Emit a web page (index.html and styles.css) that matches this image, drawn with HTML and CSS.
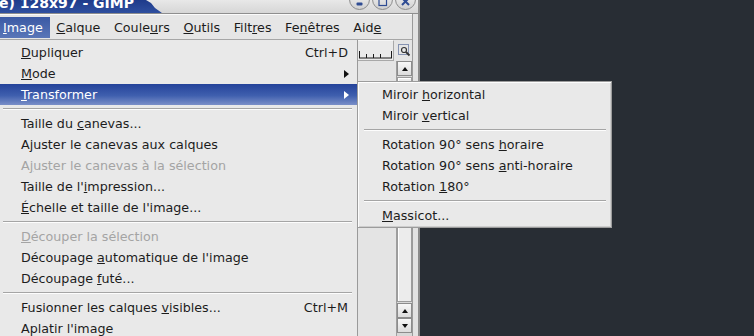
FILE: index.html
```html
<!DOCTYPE html>
<html>
<head>
  <title>GIMP - Image</title>
  <link rel="stylesheet" href="styles.css">
</head>
<body>
  <div class="screen">
    <div class="window">
      <div class="titlebar">
        <div class="title-tab"><span class="title-text">e) 128x97 - GIMP</span></div>
        <div class="title-buttons">
          <span class="tbtn">
            <svg width="21" height="21" viewBox="0 0 21 21"><rect x="7.5" y="13.5" width="6" height="3" rx="1" fill="#2f4c93"/></svg>
          </span>
          <span class="tbtn">
            <svg width="21" height="21" viewBox="0 0 21 21"><rect x="7" y="8.5" width="7.5" height="8" fill="none" stroke="#2f4c93" stroke-width="1.2"/></svg>
          </span>
          <span class="tbtn">
            <svg width="21" height="21" viewBox="0 0 21 21"><path d="M7 9 L14 16 M14 9 L7 16" stroke="#2f4c93" stroke-width="2"/></svg>
          </span>
        </div>
      </div>

      <div class="frame">
        <div class="inner">
          <div class="menubar">
            <span class="mb-item first active"><u>I</u>mage</span>
            <span class="mb-item"><u>C</u>alque</span>
            <span class="mb-item">Coule<u>u</u>rs</span>
            <span class="mb-item"><u>O</u>utils</span>
            <span class="mb-item">Filt<u>r</u>es</span>
            <span class="mb-item">Fe<u>n</u>êtres</span>
            <span class="mb-item">Aid<u>e</u></span>
          </div>

          <div class="imgwin">
            <div class="hruler">
              <svg width="36" height="19" viewBox="0 0 36 19">
                <path d="M2 17 H35 M2.5 10 V17 M9.5 13 V17 M16.5 13 V17 M23.5 13 V17 M34.5 10 V17" stroke="#1a1a1a" stroke-width="1"/>
              </svg>
            </div>
            <div class="nav-btn">
              <svg width="13" height="13" viewBox="0 0 13 13">
                <rect x="0.5" y="0.5" width="10" height="10" fill="none" stroke="#27407e" stroke-dasharray="1 1"/>
                <circle cx="6" cy="6" r="2.5" fill="#e8e8e8" stroke="#333" stroke-width="1.2"/>
                <path d="M8 8 L11.5 11.5" stroke="#333" stroke-width="1.8"/>
              </svg>
            </div>
            <div class="canvas"></div>
            <div class="vscroll">
              <div class="step up"></div>
              <div class="thumb"></div>
              <div class="step up"></div>
              <div class="step down"></div>
            </div>
          </div>
        </div>
        <div class="edge"></div>
      </div>

      <div class="menu main">
        <div class="row"><span><u>D</u>upliquer</span><span>Ctrl+D</span></div>
        <div class="row"><span><u>M</u>ode</span><span class="arrow"></span></div>
        <div class="row sel"><span><u>T</u>ransformer</span><span class="arrow"></span></div>
        <div class="sep"></div>
        <div class="row"><span>Taille du <u>c</u>anevas...</span></div>
        <div class="row"><span>Ajuster le canevas aux calques</span></div>
        <div class="row off"><span>A<u>j</u>uster le canevas à la sélection</span></div>
        <div class="row"><span>Taille de l'<u>i</u>mpression...</span></div>
        <div class="row"><span><u>É</u>chelle et taille de l'image...</span></div>
        <div class="sep"></div>
        <div class="row off"><span><u>D</u>écouper la sélection</span></div>
        <div class="row"><span>Découpage <u>a</u>utomatique de l'image</span></div>
        <div class="row"><span>Découpage <u>f</u>uté...</span></div>
        <div class="sep"></div>
        <div class="row"><span>Fusionner les calques <u>v</u>isibles...</span><span>Ctrl+M</span></div>
        <div class="row"><span>Aplatir l'image</span></div>
      </div>

      <div class="menu sub">
        <div class="row"><span>Miroir <u>h</u>orizontal</span></div>
        <div class="row"><span>Miroir <u>v</u>ertical</span></div>
        <div class="sep"></div>
        <div class="row"><span>Rotation 90° sens <u>h</u>oraire</span></div>
        <div class="row"><span>Rotation 90° sens <u>a</u>nti-horaire</span></div>
        <div class="row"><span>Rotation <u>1</u>80°</span></div>
        <div class="sep"></div>
        <div class="row"><span><u>M</u>assicot...</span></div>
      </div>
    </div>
  </div>
</body>
</html>
```

FILE: styles.css
```css
body {
  margin: 0;
  background-color: #282d34;
  font-family: "DejaVu Sans", sans-serif;
  font-size: 12.7px;
  color: #1c1c1c;
}
.screen {
  width: 754px;
  height: 336px;
  overflow: hidden;
}
.window {
  position: relative;
  width: 418px;
  height: 336px;
  border-right: 2px solid #8a8a8a;
  background-color: #e4e4e4;
  display: flex;
  flex-direction: column;
}

/* title bar */
.titlebar {
  height: 13px;
  border-bottom: 1px solid #8e8e8e;
  background: linear-gradient(#e8e8e8, #d6d6d6);
  display: flex;
  justify-content: space-between;
}
.title-tab {
  width: 162px;
  height: 13px;
  overflow: hidden;
  background: linear-gradient(#1e3b8b, #2f4f9f);
  clip-path: polygon(0 0, 146px 0, 151px 3px, 155px 8px, 162px 13px, 0 13px);
}
.title-text {
  display: block;
  margin: -3px 0 0 -1px;
  color: #fff;
  font-weight: bold;
  font-size: 14px;
  line-height: 13px;
  white-space: nowrap;
}
.title-buttons {
  display: flex;
  gap: 2px;
  margin-right: 2px;
}
.tbtn {
  width: 21px;
  height: 21px;
  margin-top: -11px;
  border-radius: 50%;
  box-sizing: border-box;
  border: 1px solid #8c8c8c;
  background: linear-gradient(#fafafa, #d0d0d0);
  display: flex;
  align-items: center;
  justify-content: center;
}
.tbtn svg {
  flex: none;
}

/* window frame */
.frame {
  flex: 1;
  display: flex;
  min-height: 0;
}
.inner {
  flex: 1;
  display: flex;
  flex-direction: column;
  min-width: 0;
}
.edge {
  width: 5px;
  background-color: #e2e2e2;
  border-left: 1px solid #9a9a9a;
}

/* menu bar */
.menubar {
  height: 22px;
  padding-top: 3px;
  border-bottom: 1px solid #a6a6a6;
  box-shadow: inset 0 1px #fafafa;
  background-color: #e6e6e6;
  display: flex;
  align-items: flex-start;
}
.mb-item {
  height: 21px;
  line-height: 21px;
  padding: 0 6.8px;
  white-space: nowrap;
}
.mb-item.first {
  padding-left: 3px;
}
.mb-item.active {
  background: linear-gradient(#3a59a4, #5a76b8);
  color: #fff;
}

/* image window body */
.imgwin {
  flex: 1;
  min-height: 0;
  display: grid;
  grid-template-columns: 1fr 16px;
  grid-template-rows: 21px 1fr;
}
.hruler {
  margin-right: 2px;
  border: 1px solid #a8a8a8;
  border-top-color: #f6f6f6;
  border-left-color: #f6f6f6;
  background-color: #eaeaea;
  display: flex;
  justify-content: flex-end;
}
.nav-btn {
  display: flex;
  align-items: center;
  justify-content: center;
  padding-left: 1px;
}
.canvas {
  background-color: #e4e4e4;
}
.vscroll {
  border-left: 1px solid #9e9e9e;
  background-color: #d8d8d8;
  display: flex;
  flex-direction: column;
  padding-bottom: 3px;
  min-height: 0;
}
.step {
  height: 13px;
  border: 1px solid #8c8c8c;
  background: linear-gradient(#f8f8f8, #dcdcdc);
  display: flex;
  align-items: center;
  justify-content: center;
}
.step::before {
  content: "";
  width: 0;
  height: 0;
  border-left: 3.5px solid transparent;
  border-right: 3.5px solid transparent;
}
.step.up::before {
  border-bottom: 4px solid #111;
}
.step.down::before {
  border-top: 4px solid #111;
}
.thumb {
  flex: 1;
  margin: 1px 0;
  border: 1px solid #9c9c9c;
  background-color: #ececec;
  box-shadow: inset 1px 1px #fff;
}

/* popup menus */
.menu {
  position: absolute;
  background-color: #e9e9e9;
}
.menu.main {
  left: 0;
  top: 40px;
  width: 357px;
  padding-top: 2px;
  border-right: 1px solid #9a9a9a;
}
.menu.sub {
  left: 357px;
  top: 81px;
  width: 253px;
  padding: 2px 0 1px;
  border: 1px solid #9c9c9c;
  box-shadow: inset 1px 1px #fdfdfd, inset -1px -1px #cdcdcd;
}
.row {
  height: 21px;
  line-height: 21px;
  padding: 0 9px 0 21px;
  display: flex;
  justify-content: space-between;
  align-items: center;
  white-space: nowrap;
}
.sub .row {
  padding-left: 24px;
}
.row.sel {
  background: linear-gradient(#24439a, #3f5fae 55%, #7a8fc8);
  color: #fff;
}
.row.off {
  color: #a4a4a4;
}
.arrow {
  width: 0;
  height: 0;
  margin-right: -1px;
  border-left: 5px solid #111;
  border-top: 4.5px solid transparent;
  border-bottom: 4.5px solid transparent;
}
.row.sel .arrow {
  border-left-color: #fff;
}
.sep {
  height: 0;
  margin: 3px 5px 3px 3px;
  border-top: 1px solid #a5a5a5;
  border-bottom: 1px solid #fdfdfd;
}
.sub .sep {
  margin: 3px 5px 3px 6px;
}
```
